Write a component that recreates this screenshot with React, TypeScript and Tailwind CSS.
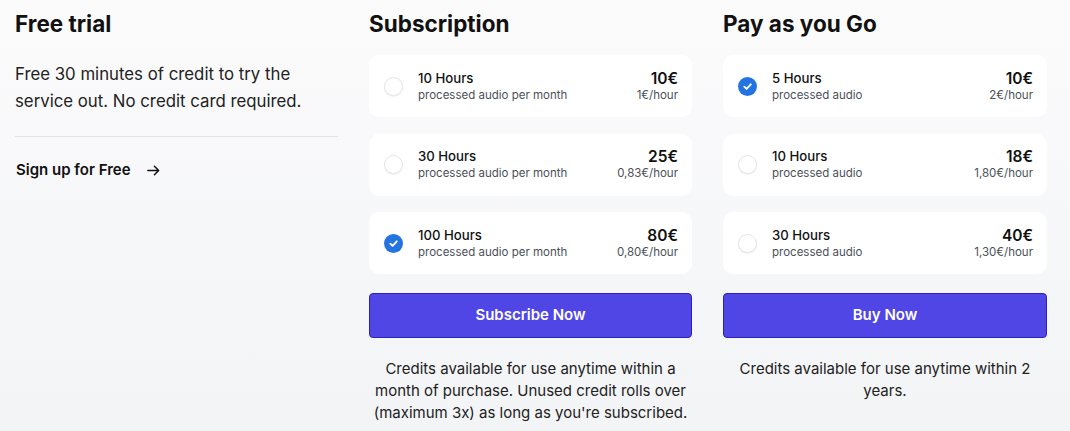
import React from "react";

type Plan = { hours: string; sub: string; price: string; rate: string; checked?: boolean };

const subs: Plan[] = [
  { hours: "10 Hours", sub: "processed audio per month", price: "10€", rate: "1€/hour" },
  { hours: "30 Hours", sub: "processed audio per month", price: "25€", rate: "0,83€/hour" },
  { hours: "100 Hours", sub: "processed audio per month", price: "80€", rate: "0,80€/hour", checked: true },
];
const payg: Plan[] = [
  { hours: "5 Hours", sub: "processed audio", price: "10€", rate: "2€/hour", checked: true },
  { hours: "10 Hours", sub: "processed audio", price: "18€", rate: "1,80€/hour" },
  { hours: "30 Hours", sub: "processed audio", price: "40€", rate: "1,30€/hour" },
];

function Radio({ checked }: { checked?: boolean }) {
  if (checked) {
    return (
      <div className="w-[19px] h-[19px] rounded-full bg-[#2374e1] flex items-center justify-center shrink-0">
        <svg width="11" height="11" viewBox="0 0 12 12" fill="none">
          <path d="M2.5 6.2 L5 8.6 L9.6 3.6" stroke="white" strokeWidth="2" strokeLinecap="round" strokeLinejoin="round" />
        </svg>
      </div>
    );
  }
  return <div className="w-[19px] h-[19px] rounded-full border border-[#e3e5e8] bg-white shadow-[0_1px_1px_rgba(0,0,0,0.06)] shrink-0" />;
}

function Card({ p }: { p: Plan }) {
  return (
    <div className="bg-white rounded-[10px] h-[62px] pl-[15px] pr-[14px] flex items-center">
      <Radio checked={p.checked} />
      <div className="ml-[15px] flex flex-col pt-[1px]">
        <span className="text-[13.2px] leading-[17px] font-medium text-[#111]">{p.hours}</span>
        <span className="text-[11.5px] leading-[17px] text-[#4b5058]">{p.sub}</span>
      </div>
      <div className="ml-auto flex flex-col items-end pt-[1px]">
        <span className="text-[15.5px] leading-[17px] font-semibold text-[#111]">{p.price}</span>
        <span className="text-[11.5px] leading-[17px] text-[#4b5058]">{p.rate}</span>
      </div>
    </div>
  );
}

function Column({ title, plans, button, note, width }: { title: string; plans: Plan[]; button: string; note: React.ReactNode; width: string }) {
  return (
    <div className={`${width} flex flex-col`}>
      <h2 className="text-[22.5px] leading-[28px] font-bold text-[#111] mt-[10px]">{title}</h2>
      <div className="mt-[17px] flex flex-col gap-[16.5px]">
        {plans.map((p, i) => (
          <Card key={i} p={p} />
        ))}
      </div>
      <button className="mt-[19px] h-[45px] rounded-[4px] bg-[#4f46e5] border border-[#2a22b8] text-white font-semibold text-[15px]">
        {button}
      </button>
      <p className="mt-[20px] text-center text-[15px] leading-[22px] text-[#222]">{note}</p>
    </div>
  );
}

export default function App() {
  return (
    <div
      className="w-[1070px] h-[431px] bg-gradient-to-b from-[#fbfbfc] to-[#f3f4f6] flex gap-[31px] pl-[15px] overflow-hidden"
      style={{ fontFamily: "Inter, 'Noto Sans', sans-serif" }}
    >
      <div className="w-[323px] flex flex-col">
        <h2 className="text-[22.5px] leading-[28px] font-bold text-[#111] mt-[10px]">Free trial</h2>
        <p className="mt-[23px] text-[16.8px] leading-[27px] text-[#222]">
          Free 30 minutes of credit to try the service out. No credit card required.
        </p>
        <div className="mt-[21px] h-px bg-[#e2e4e8]" />
        <div className="mt-[22px] flex items-center pl-[1px]">
          <span className="text-[15px] font-semibold text-[#111]">Sign up for Free</span>
          <svg className="ml-[15px]" width="15" height="15" viewBox="0 0 16 16" fill="none">
            <path d="M2 8 H13.5 M9 3.5 L13.5 8 L9 12.5" stroke="#111" strokeWidth="1.6" strokeLinecap="round" strokeLinejoin="round" />
          </svg>
        </div>
      </div>
      <Column
        width="w-[323px]"
        title="Subscription"
        plans={subs}
        button="Subscribe Now"
        note={<>Credits available for use anytime within a month of purchase. Unused credit rolls over (maximum 3x) as long as you're subscribed.</>}
      />
      <Column width="w-[324px]" title="Pay as you Go" plans={payg} button="Buy Now" note={<>Credits available for use anytime within 2 years.</>} />
    </div>
  );
}
